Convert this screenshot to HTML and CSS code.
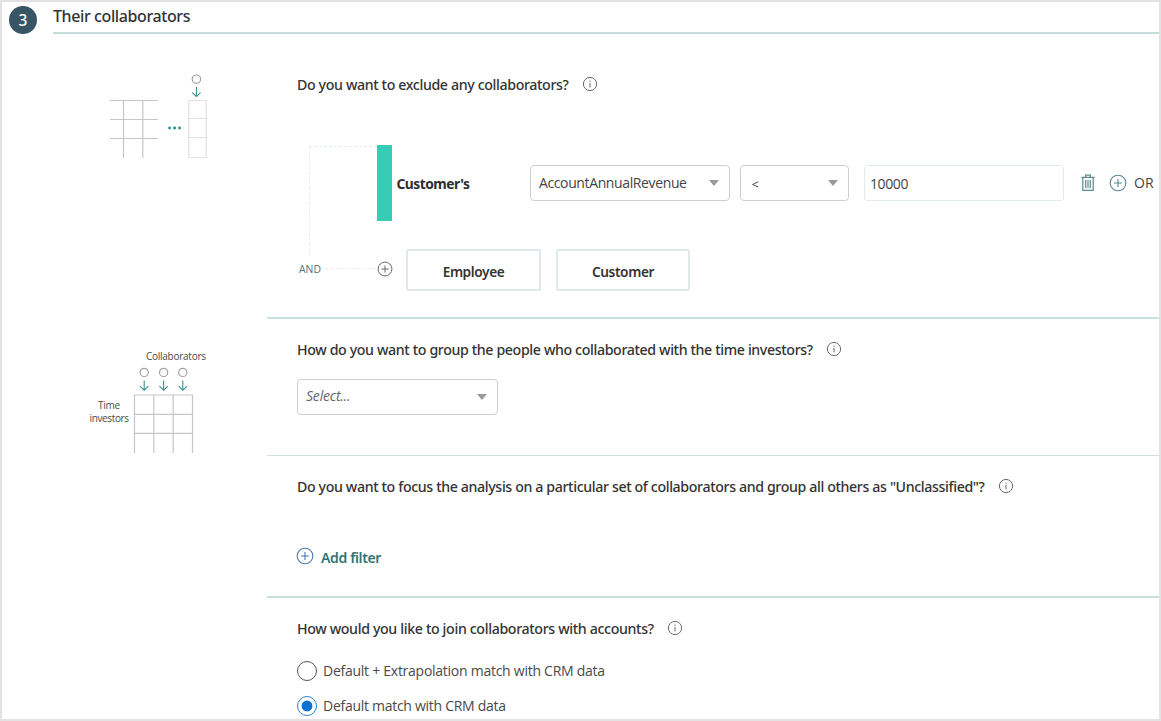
FILE: index.html
```html
<!DOCTYPE html>
<html lang="en">
<head>
<meta charset="utf-8">
<title>Their collaborators</title>
<link rel="stylesheet" href="styles.css">
</head>
<body>
<svg class="defs" width="0" height="0">
  <symbol id="info" viewBox="0 0 16 16"><g fill="none" stroke="#6a6a6a"><circle cx="8" cy="8" r="6.6"/><path d="M8 7v4.4M8 4.6v1.3" stroke="#686078"/></g></symbol>
  <symbol id="plus" viewBox="0 0 18 18"><g fill="none" stroke="currentColor" stroke-width="1.1"><circle cx="9" cy="9" r="7.8"/><path d="M9 5v8M5 9h8"/></g></symbol>
</svg>
<div class="frame">
  <header class="head">
    <div class="step">3</div>
    <h1 class="head-title">Their collaborators</h1>
  </header>

  <section class="row row-exclude">
    <div class="side">
      <svg class="art art-exclude" width="120" height="100" viewBox="100 70 120 100" fill="none">
        <path d="M110 100.5h48M110 119.5h48M110 138.5h48M123.5 100v58M142.8 100v58" stroke="#c6c6c6" stroke-width="1.2"/>
        <path d="M188.8 100.5h17.5v57h-17.5zM188.8 118.5h17.5M188.8 137.5h17.5" stroke="#e2e2e2" stroke-width="1.2"/>
        <circle cx="196.4" cy="79.2" r="4.2" stroke="#a2a2a2" stroke-width="1.2"/>
        <path d="M196.4 87v9.4M192.2 92.6l4.2 4 4.2-4" stroke="#3c9296" stroke-width="1.1"/>
        <g fill="#1f898e"><circle cx="169.6" cy="128" r="1.4"/><circle cx="174.6" cy="128" r="1.4"/><circle cx="179.6" cy="128" r="1.4"/></g>
      </svg>
    </div>
    <div class="main">
      <h2 class="question">Do you want to exclude any collaborators?<svg class="info"><use href="#info"/></svg></h2>
      <div class="rule">
        <div class="tree"></div>
        <div class="bar"></div>
        <div class="rule-name">Customer's</div>
        <div class="select select-field"><span class="value">AccountAnnualRevenue</span><span class="caret"></span></div>
        <div class="select select-op"><span class="value op">&lt;</span><span class="caret"></span></div>
        <div class="amount">10000</div>
        <svg class="trash" width="14" height="18" viewBox="0 0 14 18" fill="none" stroke="#5b8a93" stroke-width="1.2"><path d="M.4 3.4h13.2M4.6 3.2V1.2h4.8v2M1.8 3.6v12.8h10.4V3.6M4.7 6v8M7 6v8M9.3 6v8"/></svg>
        <svg class="plus plus-or"><use href="#plus"/></svg>
        <span class="or">OR</span>
      </div>
      <div class="and-row">
        <span class="and">AND</span>
        <span class="dash"></span>
        <svg class="plus plus-and"><use href="#plus"/></svg>
        <div class="btn btn-employee">Employee</div>
        <div class="btn btn-customer">Customer</div>
      </div>
    </div>
  </section>

  <section class="row row-group">
    <div class="side">
      <svg class="art art-group" width="130" height="110" viewBox="84 346 130 110" fill="none">
        <g class="art-text"><text x="146" y="359.6" textLength="60">Collaborators</text><text x="98" y="408.6" textLength="22">Time</text><text x="89.5" y="422.2" textLength="39.5">investors</text></g>
        <path d="M134.5 453v-58h58v58M153.8 395v58M173.2 395v58M134.5 414.3h58M134.5 433.4h58" stroke="#c6c6c6" stroke-width="1.2"/>
        <g stroke="#a2a2a2" stroke-width="1.2"><circle cx="144.2" cy="372.4" r="4.1"/><circle cx="163.6" cy="372.4" r="4.1"/><circle cx="182.8" cy="372.4" r="4.1"/></g>
        <path d="M144.2 380.5v9.6M140 386.2l4.2 4 4.2-4M163.6 380.5v9.6M159.4 386.2l4.2 4 4.2-4M182.8 380.5v9.6M178.6 386.2l4.2 4 4.2-4" stroke="#3c9296" stroke-width="1.1"/>
      </svg>
    </div>
    <div class="main">
      <h2 class="question">How do you want to group the people who collaborated with the time investors?<svg class="info"><use href="#info"/></svg></h2>
      <div class="select select-group"><span class="placeholder">Select...</span><span class="caret"></span></div>
    </div>
  </section>

  <section class="row row-focus">
    <div class="side"></div>
    <div class="main">
      <h2 class="question">Do you want to focus the analysis on a particular set of collaborators and group all others as "Unclassified"?<svg class="info"><use href="#info"/></svg></h2>
      <div class="add"><svg class="plus plus-add"><use href="#plus"/></svg><span class="add-text">Add filter</span></div>
    </div>
  </section>

  <section class="row row-join">
    <div class="side"></div>
    <div class="main">
      <h2 class="question">How would you like to join collaborators with accounts?<svg class="info"><use href="#info"/></svg></h2>
      <div class="option option-first"><span class="radio"></span>Default + Extrapolation match with CRM data</div>
      <div class="option"><span class="radio checked"></span>Default match with CRM data</div>
    </div>
  </section>
</div>
</body>
</html>
```
FILE: styles.css
```css
* { box-sizing: border-box; }
body { margin: 0; font-family: "Open Sans", "Noto Sans", sans-serif; font-size: 14px; color: #444; background: #fff; }
.defs { display: block; }
.frame { width: 1161px; height: 721px; border: 2px solid #e3e3e3; overflow: hidden; }

.head { display: flex; height: 32px; }
.step { flex: none; width: 28px; height: 28px; margin: 4px 16px 0 7px; border-radius: 50%; background: #375564; color: #fff; font: 500 15.5px/29px "Noto Sans", sans-serif; text-align: center; }
.head-title { flex: 1; margin: 0; height: 32px; border-bottom: 2px solid #c3dcdc; font: 500 16px/29px "Noto Sans", sans-serif; letter-spacing: -.4px; color: #333; }

.row { display: grid; grid-template-columns: 265px 1fr; }
.row-exclude { height: 285px; }
.row-group { height: 137px; grid-template-rows: 137px; }
.row-focus { height: 142px; }
.row-join { height: 123px; }
.main { padding-left: 30px; border-bottom: 2px solid #c8e0de; }
.row-group .main { border-bottom: 1px solid #cfe2e1; }
.row-join .main { border-bottom: 0; }
.row-exclude .main { padding-top: 41px; }
.row-group .main { padding-top: 21px; }
.row-focus .main { padding-top: 21px; }
.row-join .main { padding-top: 21px; }

.question { display: flex; align-items: center; height: 20px; margin: 0; font: 500 14.2px/20px "Noto Sans", sans-serif; letter-spacing: -.37px; color: #333; white-space: nowrap; }
.info { width: 16px; height: 16px; margin: -3px 0 0 13.5px; }
.row-join .question { letter-spacing: -.355px; }
.row-focus .question { letter-spacing: -.376px; }

.art { display: block; }
.art-exclude { margin: 36px 0 0 98px; }
.art-group { margin: 27px 0 0 82px; }
.art-text { font-size: 10px; fill: #4a4a4a; }

.rule { display: flex; align-items: center; height: 76px; margin-top: 50px; padding-left: 12px; }
.tree { width: 68px; height: 110px; margin: 1px 0 0; align-self: flex-start; border: dashed #e3efee; border-width: 1px 0 0 1px; }
.bar { width: 15px; height: 76px; background: #38cbb5; }
.rule-name { width: 138px; padding-left: 4.5px; font: 700 13.8px/20px "Noto Sans", sans-serif; letter-spacing: -.5px; color: #2e2e2e; margin-top: 2px; }
.select { display: flex; align-items: center; justify-content: space-between; height: 36px; padding: 0 10px 0 8px; border: 1px solid #cfcfcf; border-radius: 4px; color: #444; }
.select-field { width: 199.5px; letter-spacing: -.38px; }
.select-op { width: 109.5px; margin-left: 10px; padding-left: 11px; }
.select-group { width: 200.5px; margin: 19px 0 0; padding-right: 10px; }
.value { margin-top: -2px; }
.op { margin-top: 2px; font-size: 13px; }
.placeholder { margin-top: -3px; font-style: italic; font-size: 14px; letter-spacing: -.2px; color: #666; }
.caret { width: 0; height: 0; border: 5.5px solid transparent; border-top: 6px solid #9a9a9a; border-bottom: 0; margin-top: -1px; }
.amount { width: 199.5px; height: 36px; margin-left: 15px; padding-left: 5px; border: 1px solid #e4ecea; border-radius: 3px; font-size: 14px; line-height: 36px; letter-spacing: -.4px; }
.trash { margin-left: 17.5px; }
.plus { flex: none; width: 18px; height: 18px; }
.plus-or { margin: -1px 0 0 14px; color: #5b8a93; }
.or { margin: -2px 0 0 7px; }

.and-row { display: flex; align-items: center; height: 42px; margin-top: 28px; padding-left: 2px; }
.and { width: 26px; font-size: 10.4px; line-height: 14px; color: #55727c; margin-top: -3px; }
.dash { width: 50px; margin-top: -3px; border-top: 1px dashed #e3efee; }
.plus-and { width: 16px; height: 16px; margin: -2px 0 0 1.5px; color: #666; }
.btn { height: 42px; border: 2px solid #dfe9ed; border-radius: 2px; font: 600 13.7px/41px "Noto Sans", sans-serif; letter-spacing: -.4px; text-align: center; color: #333; }
.btn-employee { width: 135px; margin-left: 13.5px; }
.btn-customer { width: 134px; margin-left: 15px; }

.add { display: flex; align-items: center; height: 20px; margin-top: 50px; }
.plus-add { margin: -2px 7px 0 -1px; color: #4a7ab5; }
.add-text { font: 600 14px/20px "Noto Sans", sans-serif; letter-spacing: -.36px; color: #2f7577; margin-top: 1px; }

.option { display: flex; align-items: center; height: 22px; margin-top: 13px; line-height: 20px; padding-bottom: 1px; letter-spacing: -.28px; color: #4a4a4a; }
.option-first { margin-top: 21px; letter-spacing: -.26px; }
.radio { width: 20px; height: 20px; margin: 0 6px 0 0; border: 1px solid #555; border-radius: 50%; }
.checked { border-color: #2b83cc; background: radial-gradient(circle, #0f72d0 5px, transparent 5.8px); }
```
